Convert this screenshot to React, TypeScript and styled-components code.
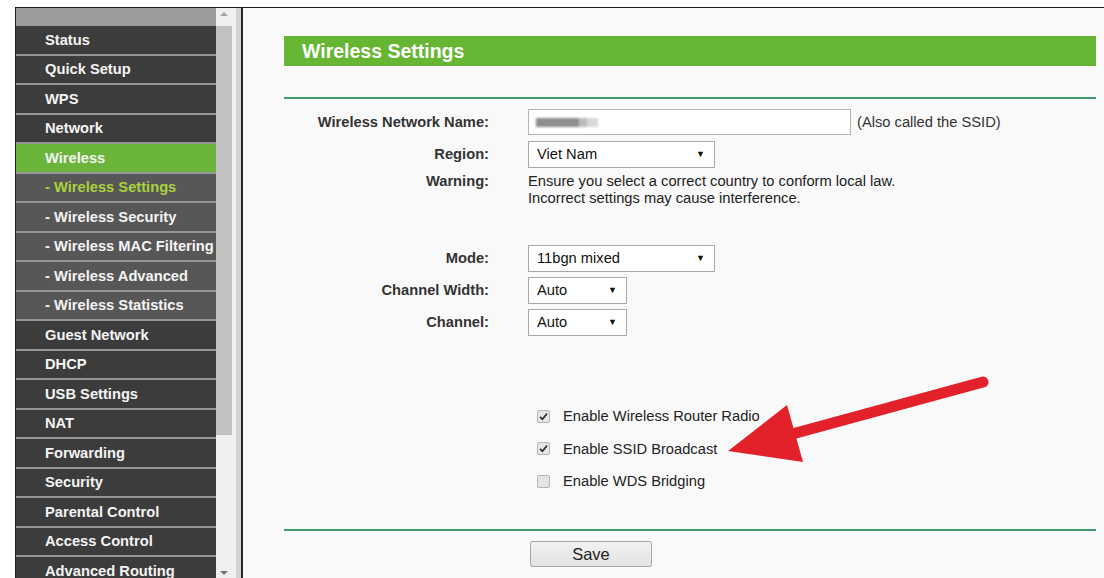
import React from 'react';
import styled, { createGlobalStyle } from 'styled-components';

const GlobalStyle = createGlobalStyle`
  html, body {
    margin: 0;
    padding: 0;
    background: #ffffff;
    overflow: hidden;
  }
  * {
    box-sizing: border-box;
  }
`;

const font = `"Liberation Sans", Arial, sans-serif`;

export const Page = styled.div`
  position: relative;
  width: 1104px;
  height: 578px;
  padding: 7px 0 0 15px;
  font-family: ${font};
`;

export const Frame = styled.div`
  display: flex;
  height: 100%;
  border-top: 1px solid #1e1e1e;
  border-left: 1px solid #1e1e1e;
  overflow: hidden;
`;

/* ---------- left menu frame ---------- */

export const Menu = styled.div`
  width: 200px;
  flex-shrink: 0;
  display: flex;
  flex-direction: column;
  background: #3c3c3c;
`;

export const MenuTop = styled.div`
  height: 18px;
  flex-shrink: 0;
  background: #9c9c9c;
`;

type Variant = 'main' | 'active' | 'sub' | 'current';

const itemBg: Record<Variant, string> = {
  main: '#3c3c3c',
  active: '#6ab43c',
  sub: '#575757',
  current: '#575757',
};

export const MenuItem = styled.div<{ $variant: Variant }>`
  height: 29.5px;
  flex-shrink: 0;
  display: flex;
  align-items: center;
  padding-left: 29px;
  border-bottom: 2px solid #969696;
  background: ${({ $variant }) => itemBg[$variant]};
  color: ${({ $variant }) => ($variant === 'current' ? '#a8d23e' : '#f4f4f4')};
  font-size: 14.7px;
  font-weight: 700;
  white-space: nowrap;
  overflow: hidden;
`;

export const ScrollTrack = styled.div`
  width: 25px;
  flex-shrink: 0;
  display: flex;
  flex-direction: column;
  align-items: center;
  padding-right: 5px;
  background: #f0f0f0;
  border-right: 5px solid #d2d2d2;
`;

export const ScrollArrow = styled.div<{ $down?: boolean }>`
  width: 0;
  height: 0;
  margin: ${({ $down }) => ($down ? 'auto 0 3px' : '4px 0 0')};
  border-left: 4px solid transparent;
  border-right: 4px solid transparent;
  ${({ $down }) => ($down ? 'border-top: 4px solid #777;' : 'border-bottom: 4px solid #a6a6a6;')}
`;

export const ScrollThumb = styled.div`
  width: 16px;
  height: 409px;
  margin-top: 10px;
  background: #c1c1c1;
`;

export const FrameEdge = styled.div`
  width: 2px;
  flex-shrink: 0;
  background: #2a2a2a;
`;

/* ---------- main frame ---------- */

export const Main = styled.div`
  flex: 1;
  background: #f9f9f9;
  padding: 28px 8px 0 41px;
  color: #222;
  font-size: 14.7px;
`;

export const TitleBar = styled.div`
  height: 30px;
  display: flex;
  align-items: center;
  padding-left: 18px;
  background: #66b634;
  color: #ffffff;
  font-size: 19.5px;
  font-weight: 700;
`;

export const Rule = styled.div<{ $top: number }>`
  height: 2px;
  margin-top: ${({ $top }) => $top}px;
  background: #3f9a6c;
`;

export const FieldRow = styled.div<{ $top?: number; $h?: number; $start?: boolean }>`
  display: grid;
  grid-template-columns: 205px 1fr;
  column-gap: 39px;
  align-items: ${({ $start }) => ($start ? 'start' : 'center')};
  min-height: ${({ $h }) => $h ?? 32}px;
  margin-top: ${({ $top }) => $top ?? 0}px;
`;

export const Label = styled.div`
  text-align: right;
  font-weight: 700;
  color: #333;
  line-height: 17px;
`;

export const Control = styled.div`
  display: flex;
  align-items: center;
`;

export const TextBox = styled.div`
  width: 323px;
  height: 26px;
  display: flex;
  align-items: center;
  padding-left: 7px;
  background: #ffffff;
  border: 1px solid #b4b4b4;
`;

export const Masked = styled.span`
  width: 62px;
  height: 9px;
  background: linear-gradient(90deg, #8e8e8e 0 70%, #bdbdbd 70% 82%, #d8d8d8 82%);
  filter: blur(0.8px);
`;

export const Hint = styled.span`
  margin-left: 6px;
  color: #333;
`;

export const Select = styled.div<{ $w: number }>`
  width: ${({ $w }) => $w}px;
  height: 27px;
  display: flex;
  align-items: center;
  justify-content: space-between;
  padding: 0 9px 0 8px;
  background: #ffffff;
  border: 1px solid #a9a9a9;
  color: #111;
`;

export const Caret = styled.span`
  font-size: 9px;
  color: #111;
`;

export const Note = styled.div`
  line-height: 17px;
  color: #222;
`;

export const CheckList = styled.div`
  margin-top: 62px;
  padding-left: 244px;
`;

export const CheckRow = styled.div`
  height: 32.5px;
  display: flex;
  align-items: center;
  padding-left: 9px;
  color: #222;
`;

export const Box = styled.span`
  width: 13px;
  height: 13px;
  margin-right: 13px;
  display: flex;
  align-items: center;
  justify-content: center;
  background: #e4e4e4;
  border: 1px solid #b5b5b5;
  border-radius: 2px;
`;

export const SaveRow = styled.div`
  margin-top: 10px;
  padding-left: 246px;
`;

export const Button = styled.div`
  width: 122px;
  height: 26px;
  display: flex;
  align-items: center;
  justify-content: center;
  background: linear-gradient(#f2f2f2, #e2e2e2);
  border: 1px solid #a8a8a8;
  border-radius: 2px;
  font-size: 16.5px;
  color: #222;
`;

export const Pointer = styled.svg`
  position: absolute;
  left: 0;
  top: 0;
  pointer-events: none;
`;

const menu: [string, Variant][] = [
  ['Status', 'main'],
  ['Quick Setup', 'main'],
  ['WPS', 'main'],
  ['Network', 'main'],
  ['Wireless', 'active'],
  ['- Wireless Settings', 'current'],
  ['- Wireless Security', 'sub'],
  ['- Wireless MAC Filtering', 'sub'],
  ['- Wireless Advanced', 'sub'],
  ['- Wireless Statistics', 'sub'],
  ['Guest Network', 'main'],
  ['DHCP', 'main'],
  ['USB Settings', 'main'],
  ['NAT', 'main'],
  ['Forwarding', 'main'],
  ['Security', 'main'],
  ['Parental Control', 'main'],
  ['Access Control', 'main'],
  ['Advanced Routing', 'main'],
  ['Bandwidth Control', 'main'],
];

const Check = ({ on }: { on: boolean }) => (
  <Box>
    {on && (
      <svg width="9" height="9" viewBox="0 0 9 9">
        <path d="M1 4.8 L3.4 7.2 L8 1.6" fill="none" stroke="#333" strokeWidth="1.7" />
      </svg>
    )}
  </Box>
);

const App = (): JSX.Element => {
  return (
    <Page>
      <GlobalStyle />
      <Frame>
        <Menu>
          <MenuTop />
          {menu.map(([name, v]) => (
            <MenuItem key={name} $variant={v}>
              {name}
            </MenuItem>
          ))}
        </Menu>
        <ScrollTrack>
          <ScrollArrow />
          <ScrollThumb />
          <ScrollArrow $down />
        </ScrollTrack>
        <FrameEdge />
        <Main>
          <TitleBar>Wireless Settings</TitleBar>
          <Rule $top={31} />

          <FieldRow $top={7}>
            <Label>Wireless Network Name:</Label>
            <Control>
              <TextBox>
                <Masked />
              </TextBox>
              <Hint>(Also called the SSID)</Hint>
            </Control>
          </FieldRow>
          <FieldRow>
            <Label>Region:</Label>
            <Control>
              <Select $w={187}>
                Viet Nam <Caret>▼</Caret>
              </Select>
            </Control>
          </FieldRow>
          <FieldRow $top={3} $h={34} $start>
            <Label>Warning:</Label>
            <Note>
              Ensure you select a correct country to conform local law.
              <br />
              Incorrect settings may cause interference.
            </Note>
          </FieldRow>

          <FieldRow $top={35}>
            <Label>Mode:</Label>
            <Control>
              <Select $w={187}>
                11bgn mixed <Caret>▼</Caret>
              </Select>
            </Control>
          </FieldRow>
          <FieldRow>
            <Label>Channel Width:</Label>
            <Control>
              <Select $w={99}>
                Auto <Caret>▼</Caret>
              </Select>
            </Control>
          </FieldRow>
          <FieldRow>
            <Label>Channel:</Label>
            <Control>
              <Select $w={99}>
                Auto <Caret>▼</Caret>
              </Select>
            </Control>
          </FieldRow>

          <CheckList>
            <CheckRow>
              <Check on />
              Enable Wireless Router Radio
            </CheckRow>
            <CheckRow>
              <Check on />
              Enable SSID Broadcast
            </CheckRow>
            <CheckRow>
              <Check on={false} />
              Enable WDS Bridging
            </CheckRow>
          </CheckList>

          <Rule $top={31.5} />
          <SaveRow>
            <Button>Save</Button>
          </SaveRow>
        </Main>
      </Frame>

      {/* red call-out arrow drawn over the form */}
      <Pointer width="1104" height="578" viewBox="0 0 1104 578">
        <line x1="983" y1="382" x2="796" y2="433" stroke="#e3212a" strokeWidth="11" strokeLinecap="round" />
        <polygon points="728,451 787,405 803,462" fill="#e3212a" />
      </Pointer>
    </Page>
  );
};

export default App;
